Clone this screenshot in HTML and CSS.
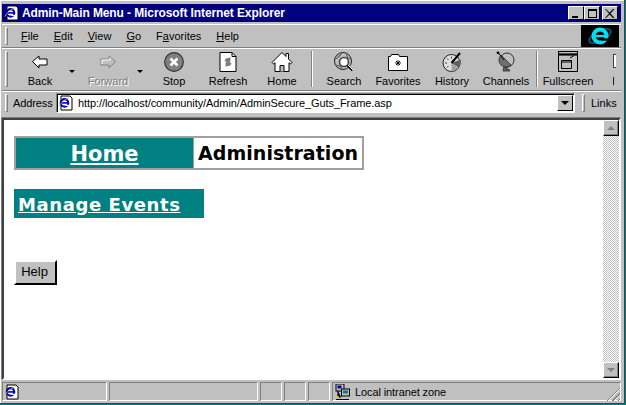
FILE: index.html
```html
<!DOCTYPE html>
<html lang="en">
<head>
  <meta charset="UTF-8" />
  <title>Admin-Main Menu - Microsoft Internet Explorer</title>
  <link rel="stylesheet" href="styles.css">
</head>
<body>
  <svg class="defs" width="0" height="0">
    <symbol id="ie" viewBox="0 0 16 16">
      <circle cx="8" cy="8.5" r="4.6" fill="none" stroke="currentColor" stroke-width="2.6"/>
      <path d="M3.5 8.5h9" stroke="currentColor" stroke-width="2"/>
      <path d="M9 11.5h5" stroke="#fff" stroke-width="1.4"/>
      <path d="M1 13c2-4 7-9 13-11" fill="none" stroke="#e0c020" stroke-width="1"/>
    </symbol>
  </svg>

  <div class="window">
    <div class="titlebar">
      <svg class="title-icon" width="16" height="16" viewBox="0 0 16 16">
        <path d="M3 1h9l2 2v12H3z" fill="#fff" stroke="#000"/>
        <use href="#ie" x="0" y="1" width="13" height="13" color="#0000c0"/>
      </svg>
      <span class="title-text">Admin-Main Menu - Microsoft Internet Explorer</span>
      <div class="caption-btns">
        <div class="cap-btn"><i class="cap-min"></i></div>
        <div class="cap-btn"><i class="cap-max"></i></div>
        <div class="cap-btn cap-close">
          <svg width="10" height="9" viewBox="0 0 10 9"><path d="M1 0l3.5 3.5L8 0h1.500L5.500 4.500 9.500 9H8L4.500 5.500 1 9H0l4-4.500L0 0z" fill="#000"/></svg>
        </div>
      </div>
    </div>

    <div class="band menubar">
      <div class="grip"></div>
      <nav class="menu">
        <span><u>F</u>ile</span>
        <span><u>E</u>dit</span>
        <span><u>V</u>iew</span>
        <span><u>G</u>o</span>
        <span>F<u>a</u>vorites</span>
        <span><u>H</u>elp</span>
      </nav>
      <div class="throbber">
        <svg width="26" height="24" viewBox="0 0 26 24">
          <ellipse cx="13" cy="12" rx="12" ry="5" transform="rotate(-28 13 12)" fill="none" stroke="#0078a0" stroke-width="1.200"/>
          <circle cx="13" cy="12" r="6.500" fill="none" stroke="#00e0f0" stroke-width="4"/>
          <path d="M7 12h12" stroke="#00e0f0" stroke-width="2.400"/>
          <path d="M14 15.500h7" stroke="#000" stroke-width="2.400"/>
        </svg>
      </div>
    </div>

    <div class="band toolbar">
      <div class="grip tall"></div>
      <div class="tool split">
        <svg width="22" height="22" viewBox="0 0 22 22"><path d="M3.500 10.500L10 5v3h8v6h-8v3z" fill="#fff" stroke="#000"/></svg>
        <span>Back</span>
      </div>
      <div class="drop"></div>
      <div class="tool split off">
        <svg width="22" height="22" viewBox="0 0 22 22"><path d="M18.500 10.500L12 5v3H4v6h8v3z" fill="#c0c0c0" stroke="#808080"/><path d="M5 13V9h8V6.500" fill="none" stroke="#fff"/></svg>
        <span>Forward</span>
      </div>
      <div class="drop narrow"></div>
      <div class="tool">
        <svg width="22" height="22" viewBox="0 0 22 22"><circle cx="11" cy="11" r="9.300" fill="#808080" stroke="#303030" stroke-width="1.200"/><path d="M7.500 7.500l7 7m0-7l-7 7" stroke="#fff" stroke-width="2.600"/></svg>
        <span>Stop</span>
      </div>
      <div class="tool">
        <svg width="22" height="22" viewBox="0 0 22 22"><path d="M3 1.500h12l4 4v15H3z" fill="#fff" stroke="#000"/><path d="M15 1.500v4h4" fill="none" stroke="#000"/><path d="M8 10c0-2 2-3 4-2.500l1-1v4h-4M14 12c0 2-2 3-4 2.500l-1 1v-4h4" fill="#808080" stroke="#606060" stroke-width=".6"/></svg>
        <span>Refresh</span>
      </div>
      <div class="tool">
        <svg width="22" height="22" viewBox="0 0 22 22"><path d="M1 11.500L11 1.500l4 4V2.500h2.500v5.500L21 11.500l-1.500 1.500L18 11.700V20.500H4V11.700L2.500 13z" fill="#fff" stroke="#000"/><path d="M9 20.500v-6h4v6" fill="#c0c0c0" stroke="#000"/></svg>
        <span>Home</span>
      </div>
      <div class="tool-sep"></div>
      <div class="tool">
        <svg width="22" height="22" viewBox="0 0 22 22"><circle cx="10" cy="10" r="8.500" fill="#c0c0c0" stroke="#202020"/><path d="M2 8c4-1 6-5 7-6.500M14 2.500c-1 3 1 5 4 5.500M3 14c3 0 5 2 6 4.500" fill="none" stroke="#606060" stroke-width="1.200"/><circle cx="11" cy="11" r="4.500" fill="#fff" stroke="#404040" stroke-width="1.600"/><path d="M14.500 14.500l5 5" stroke="#000" stroke-width="2"/><path d="M15 14l5 5" stroke="#fff"/></svg>
        <span>Search</span>
      </div>
      <div class="tool">
        <svg width="22" height="22" viewBox="0 0 22 22"><path d="M1.500 5.500h2l1-2h7l1 2h8v14h-19z" fill="#fff" stroke="#000"/><path d="M11 9v6M8 12h6M9 10l4 4m0-4l-4 4" stroke="#000" stroke-width=".9"/></svg>
        <span>Favorites</span>
      </div>
      <div class="tool">
        <svg width="22" height="22" viewBox="0 0 22 22"><circle cx="10.500" cy="12" r="8.500" fill="#e0e0e0" stroke="#202020"/><path d="M10.500 12l9-3.500a9 9 0 0 1-2 8z" fill="#606060"/><path d="M10.500 12l6.500 5a9 9 0 0 1-6.500 3.500z" fill="#a0a0a0"/><path d="M10.500 12L19 2" stroke="#000" stroke-width="2"/><path d="M4 12h2M10.500 5.500v2M6 7.500l1.500 1.500M6 16.500l1.500-1.500" stroke="#404040"/></svg>
        <span>History</span>
      </div>
      <div class="tool">
        <svg width="22" height="22" viewBox="0 0 22 22"><path d="M9 15l-1 5h7l-1.500-2H12l-.5-3z" fill="#606060" stroke="#202020" stroke-width=".7"/><circle cx="12" cy="9" r="7" fill="#c0c0c0" stroke="#303030"/><path d="M6 4l10 10a7 7 0 0 1-10-10z" fill="#707070" stroke="#202020" stroke-width=".7"/><path d="M3 1.500L9 9" stroke="#000"/><circle cx="3" cy="1.800" r="1.400" fill="#000"/></svg>
        <span>Channels</span>
      </div>
      <div class="tool-sep second"></div>
      <div class="tool">
        <svg width="22" height="22" viewBox="0 0 22 22"><rect x="1.500" y=".5" width="19" height="20" fill="#c0c0c0" stroke="#000"/><path d="M1.500 3.500h19" stroke="#000" stroke-width="2.200"/><path d="M4.500 9.500h10v8h-10z" fill="#c0c0c0" stroke="#000"/><path d="M4.500 11h10" stroke="#000"/><path d="M13 7l4-2.500" stroke="#000"/></svg>
        <span>Fullscreen</span>
      </div>
      <div class="clipped">
        <div class="clipped-icon"></div>
        <div class="clipped-stem"></div>
      </div>
    </div>

    <div class="band addressbar">
      <div class="grip short"></div>
      <span class="addr-label">Address</span>
      <div class="addr-field">
        <svg width="16" height="16" viewBox="0 0 16 16">
          <path d="M3 1h9l2 2v12H3z" fill="#fff" stroke="#000"/>
          <use href="#ie" x="0" y="1" width="13" height="13" color="#0000c0"/>
        </svg>
        <span class="addr-url">http://localhost/community/Admin/AdminSecure_Guts_Frame.asp</span>
        <div class="addr-drop"><i></i></div>
      </div>
      <div class="grip short links-grip"></div>
      <span class="links">Links</span>
    </div>

    <div class="view">
      <main class="page">
        <div class="tabs">
          <a class="tab-home" href="#">Home</a>
          <div class="tab-current">Administration</div>
        </div>
        <div class="section-link"><a href="#">Manage Events</a></div>
        <button class="help-btn">Help</button>
      </main>
      <div class="scrollbar">
        <div class="sb-btn"><i class="up"></i></div>
        <div class="sb-track"></div>
        <div class="sb-btn"><i class="down"></i></div>
      </div>
    </div>

    <div class="statusbar">
      <div class="pane p1">
        <svg width="16" height="16" viewBox="0 0 16 16">
          <path d="M3 1h9l2 2v12H3z" fill="#fff" stroke="#000"/>
          <use href="#ie" x="0" y="1" width="13" height="13" color="#0000c0"/>
        </svg>
      </div>
      <div class="pane p2"></div>
      <div class="pane p3"></div>
      <div class="pane p3"></div>
      <div class="pane p3"></div>
      <div class="pane zone">
        <svg width="16" height="16" viewBox="0 0 16 16">
          <rect x="1" y="0" width="8" height="7" fill="#c0c0c0" stroke="#000"/>
          <rect x="2.500" y="1.500" width="4" height="3" fill="#0000c0"/>
          <rect x="6.500" y="5" width="8" height="7" fill="#c0c0c0" stroke="#000"/>
          <rect x="8" y="6.500" width="5" height="3" fill="#008080"/>
          <path d="M3 7v6h3M1 15.500h13" stroke="#000" stroke-width="1.200"/>
          <rect x="2" y="12" width="2" height="2" fill="#c0c000"/>
        </svg>
        <span>Local intranet zone</span>
      </div>
      <div class="resize"></div>
    </div>
  </div>
</body>
</html>
```
FILE: styles.css
```css
html, body {
  margin: 0;
  height: 100%;
  overflow: hidden;
}
body {
  background: #008080;
  font-family: "Liberation Sans", Arial, sans-serif;
  font-size: 11px;
  color: #000;
}
.defs {
  display: block;
  height: 0;
}
.window {
  box-sizing: border-box;
  width: 625px;
  height: 404px;
  display: flex;
  flex-direction: column;
  padding: 4px 3px 2px 2px;
  background: #c0c0c0;
  border-right: 1px solid #404040;
  border-bottom: 1px solid #404040;
  box-shadow: inset 1px 1px 0 #fff;
}

/* title bar */
.titlebar {
  height: 18px;
  flex: none;
  display: flex;
  align-items: center;
  background: #000080;
  color: #fff;
  font-weight: bold;
  font-size: 12px;
  letter-spacing: -0.1px;
}
.title-icon {
  margin: 0 2px;
  flex: none;
}
.title-text {
  flex: 1;
  white-space: nowrap;
}
.caption-btns {
  display: flex;
  margin-right: 3px;
}
.cap-btn {
  width: 16px;
  height: 14px;
  box-sizing: border-box;
  background: #c0c0c0;
  border: 1px solid;
  border-color: #fff #000 #000 #fff;
  display: flex;
  align-items: center;
  justify-content: center;
  position: relative;
}
.cap-close {
  margin-left: 2px;
}
.cap-min {
  width: 6px;
  height: 2px;
  background: #000;
  margin-top: 7px;
  margin-right: 3px;
}
.cap-max {
  width: 9px;
  height: 9px;
  box-sizing: border-box;
  border: 1px solid #000;
  border-top-width: 2px;
}

/* rebars */
.band {
  display: flex;
  flex: none;
  align-items: center;
  border-top: 1px solid #fff;
  border-bottom: 1px solid #808080;
  box-sizing: border-box;
}
.menubar {
  height: 24px;
  margin-top: 2px;
  padding-bottom: 1px;
}
.toolbar {
  height: 43px;
  align-items: flex-start;
  padding-top: 2px;
}
.addressbar {
  height: 24px;
  border-bottom: 0;
  padding-bottom: 2px;
}
.grip {
  width: 3px;
  height: 18px;
  margin: 0 0 0 3px;
  flex: none;
  box-sizing: border-box;
  border: 1px solid;
  border-color: #fff #808080 #808080 #fff;
}
.grip.tall {
  height: 36px;
  margin-right: 6px;
}
.grip.short {
  height: 18px;
}
.menu {
  flex: 1;
  display: flex;
  gap: 15px;
  padding-left: 13px;
  padding-top: 1px;
}
.throbber {
  width: 38px;
  height: 22px;
  margin: 1px 2px 0 0;
  background: #000;
  display: flex;
  justify-content: center;
  align-items: center;
}

/* toolbar buttons */
.tool {
  width: 54px;
  flex: none;
  display: flex;
  flex-direction: column;
  align-items: center;
  font-size: 11px;
}
.tool span {
  margin-top: 1px;
  line-height: 14px;
  white-space: nowrap;
}
.tool.split {
  width: 52px;
}
.tool.off span {
  color: #808080;
  text-shadow: 1px 1px 0 #fff;
}
.drop {
  width: 16px;
  flex: none;
  position: relative;
  height: 24px;
}
.drop.narrow {
  width: 13px;
}
.drop::after {
  content: "";
  position: absolute;
  left: 3px;
  top: 19px;
  border: 3px solid transparent;
  border-top: 3px solid #000;
  border-bottom: 0;
}
.tool-sep {
  width: 2px;
  height: 36px;
  flex: none;
  margin: 0 4px 0 2px;
  background: #fff;
  border-left: 1px solid #808080;
  box-sizing: border-box;
}
.tool-sep.second {
  margin: 0 3px 0 3px;
}
.clipped {
  width: 4px;
  margin-left: 18px;
  flex: none;
}
.clipped-icon {
  width: 3px;
  height: 14px;
  margin: 3px 0 9px;
  box-sizing: border-box;
  border: 1px solid #404040;
  border-right: 0;
  background: #fff;
}
.clipped-stem {
  width: 1px;
  height: 8px;
  background: #202020;
}

/* address bar */
.addr-label {
  margin-left: 5px;
  width: 43px;
  flex: none;
  letter-spacing: -0.1px;
}
.addr-field {
  width: 519px;
  height: 20px;
  flex: none;
  box-sizing: border-box;
  background: #fff;
  border: 1px solid;
  border-color: #808080 #fff #fff #808080;
  box-shadow: inset 1px 1px 0 #000;
  display: flex;
  align-items: center;
  padding: 1px 1px 0 1px;
}
.addr-url {
  flex: 1;
  margin-left: 4px;
  white-space: nowrap;
  letter-spacing: -0.08px;
}
.addr-drop {
  width: 16px;
  height: 16px;
  box-sizing: border-box;
  background: #c0c0c0;
  border: 1px solid;
  border-color: #fff #000 #000 #fff;
  display: flex;
  align-items: center;
  justify-content: center;
}
.addr-drop i {
  border: 4px solid transparent;
  border-top: 4px solid #000;
  border-bottom: 0;
}
.links-grip {
  margin-left: 7px;
}
.links {
  margin-left: 6px;
}

/* content frame */
.view {
  flex: 1;
  min-height: 0;
  margin: 3px 0 2px 0;
  display: flex;
  background: #fff;
  border: 2px solid;
  border-color: #404040 #fff #fff #404040;
  box-shadow: -1px -1px 0 #808080;
}
.page {
  flex: 1;
  padding: 16px 0 0 10px;
}
.tabs {
  box-sizing: border-box;
  display: flex;
  width: 350px;
  height: 34px;
  border: 2px solid #a0a0a0;
  font-family: "DejaVu Sans", Verdana, sans-serif;
  font-weight: bold;
  font-size: 19px;
  letter-spacing: 0.05px;
}
.tab-home {
  width: 177px;
  flex: none;
  background: #008080;
  color: #fff;
  text-align: center;
  line-height: 33px;
  font-size: 21px;
  letter-spacing: 0;
}
.tab-current {
  flex: 1;
  border-left: 1px solid #a0a0a0;
  padding-left: 4px;
  line-height: 30px;
  white-space: nowrap;
}
.section-link {
  width: 186px;
  height: 29px;
  margin-top: 19px;
  padding-left: 4px;
  background: #008080;
  line-height: 32px;
  font-family: "DejaVu Sans", Verdana, sans-serif;
  font-weight: bold;
  font-size: 18px;
  letter-spacing: 0.6px;
}
.section-link a {
  color: #fff;
}
.help-btn {
  display: block;
  width: 43px;
  height: 25px;
  margin-top: 42px;
  padding: 0 2px 2px 0;
  background: #c0c0c0;
  border: 2px solid;
  border-color: #fff #000 #000 #fff;
  font-family: "Liberation Sans", Arial, sans-serif;
  font-size: 13px;
  color: #000;
}

/* scrollbar */
.scrollbar {
  width: 16px;
  flex: none;
  display: flex;
  flex-direction: column;
}
.sb-btn {
  height: 16px;
  flex: none;
  box-sizing: border-box;
  background: #c0c0c0;
  border: 1px solid;
  border-color: #fff #000 #000 #fff;
  box-shadow: inset -1px -1px 0 #808080;
  display: flex;
  align-items: center;
  justify-content: center;
}
.sb-btn i {
  border: 4px solid transparent;
}
.sb-btn .up {
  border-bottom: 4px solid #808080;
  border-top: 0;
}
.sb-btn .down {
  border-top: 4px solid #808080;
  border-bottom: 0;
}
.sb-track {
  flex: 1;
  background-color: #fff;
  background-image: repeating-conic-gradient(#c0c0c0 0 25%, #fff 0 50%);
  background-size: 2px 2px;
}

/* status bar */
.statusbar {
  height: 19px;
  flex: none;
  display: flex;
  gap: 2px;
  position: relative;
}
.pane {
  box-sizing: border-box;
  height: 19px;
  border: 1px solid;
  border-color: #808080 #fff #fff #808080;
  display: flex;
  align-items: center;
}
.p1 {
  width: 105px;
  padding-left: 1px;
}
.p2 {
  width: 149px;
}
.p3 {
  width: 22px;
}
.zone {
  flex: 1;
  gap: 4px;
  padding-left: 2px;
  letter-spacing: -0.1px;
}
.resize {
  position: absolute;
  right: 1px;
  bottom: 0;
  width: 14px;
  height: 14px;
  background: repeating-linear-gradient(135deg, transparent 0 2px, #808080 2px 3px, #fff 3px 4px);
  clip-path: polygon(100% 0, 100% 100%, 0 100%);
}
```
